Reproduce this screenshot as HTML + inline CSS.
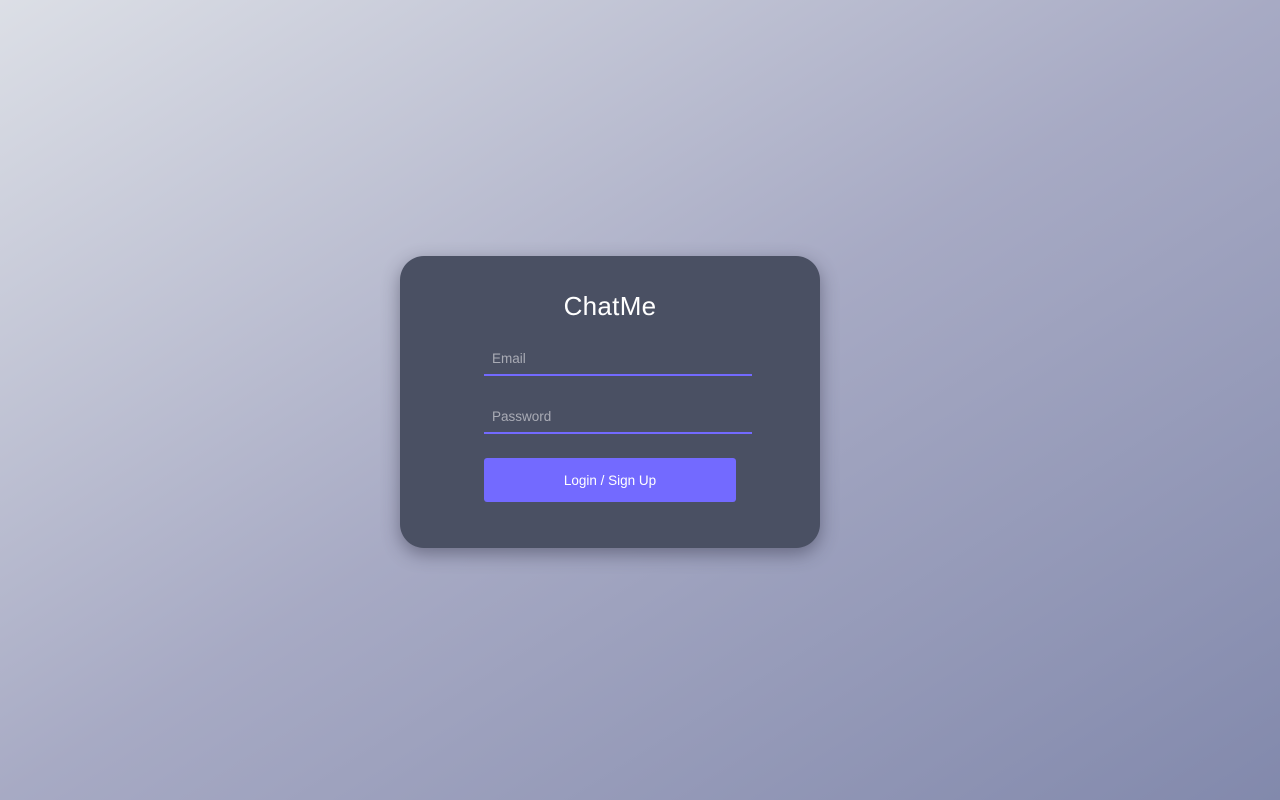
<!DOCTYPE html>
<html><head><style>
html,body{margin:0;width:1280px;height:800px;overflow:hidden}
body{background:linear-gradient(to bottom right,#dcdfe6 0%,#a7aac4 50%,#8289ac 100%);font-family:"Liberation Sans",sans-serif;position:relative}
.card{position:absolute;left:400px;top:256px;width:420px;height:292px;background:#4a5063;border-radius:24px;box-shadow:0 6px 18px rgba(40,40,60,.45)}
h1{position:absolute;left:0;right:0;top:35px;margin:0;text-align:center;color:#fff;font-weight:normal;font-size:26px;letter-spacing:.3px}
.in{position:absolute;left:84px;width:268px;height:2px;background:#736aff}
.lb{position:absolute;left:92px;color:#a9abb5;font-size:13.5px}
.btn{position:absolute;left:84px;top:202px;width:252px;height:44px;background:#736aff;border-radius:3px;color:#fff;font-size:13.5px;text-align:center;line-height:46px}
</style></head><body>
<div class="card">
<h1>ChatMe</h1>
<div class="lb" style="top:95px">Email</div><div class="in" style="top:118px"></div>
<div class="lb" style="top:153px">Password</div><div class="in" style="top:176px"></div>
<div class="btn">Login / Sign Up</div>
</div>
</body></html>
